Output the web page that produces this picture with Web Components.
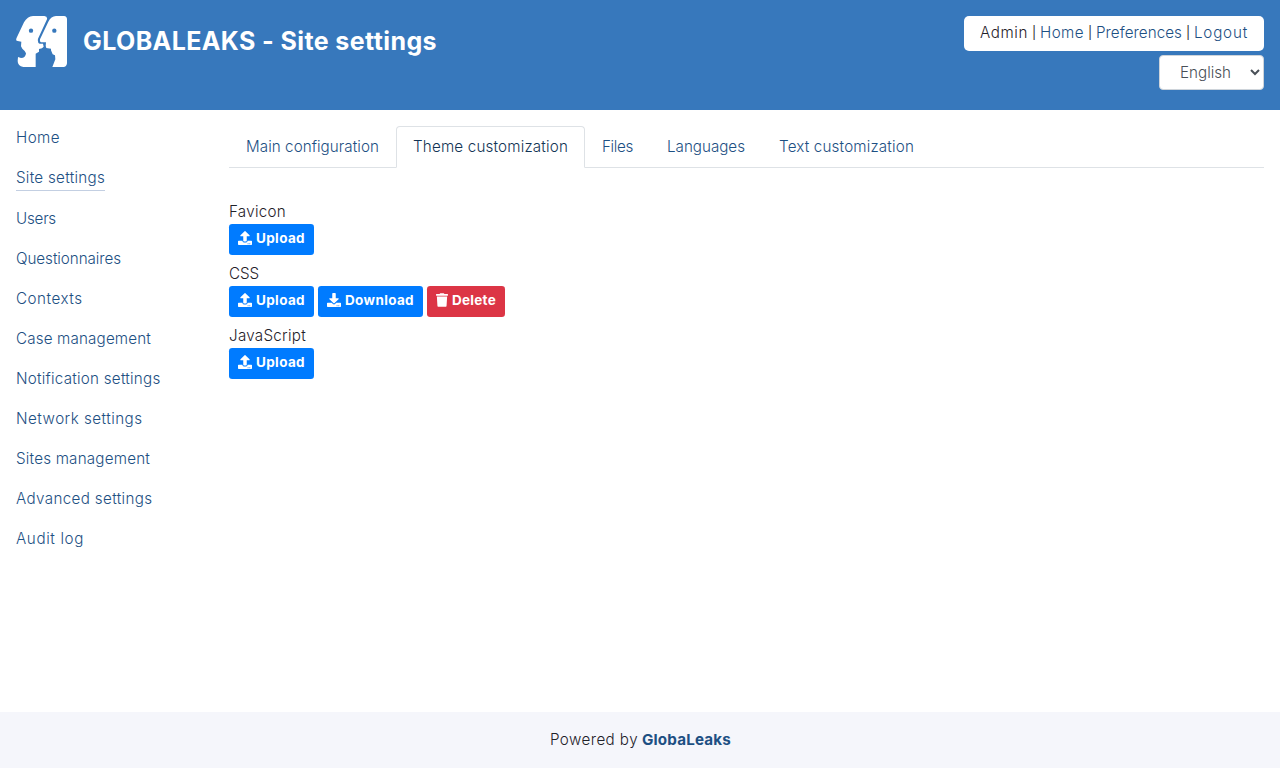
<!DOCTYPE html>
<html lang="en">
<head>
<meta charset="utf-8">
<title>GLOBALEAKS - Site settings</title>
<style>
html,body{margin:0;height:100%}
body{font:360 15.2px/24px Inter,"Open Sans",sans-serif;color:#1f2129;background:#fff}
</style>
</head>
<body>
<gl-app></gl-app>
<script>
const define = (name, html, setup) => {
  const template = document.createElement('template');
  template.innerHTML = html;
  customElements.define(name, class extends HTMLElement {
    constructor() {
      super();
      this.attachShadow({mode: 'open'}).append(template.content.cloneNode(true));
    }
    connectedCallback() { if (setup) setup(this, this.shadowRoot); }
  });
};

// Text tracked to a fixed measure given by its "w" attribute.
define('gl-text', `<style>:host{display:inline-block;white-space:nowrap}span{display:inline-block}</style><span><slot></slot></span>`, (el, root) => {
  const span = root.querySelector('span'), w = +el.getAttribute('w');
  const natural = span.getBoundingClientRect().width;
  span.style.letterSpacing = (w - natural) / el.textContent.length + 'px';
  el.style.width = w + 'px';
});

define('gl-logo', `<style>:host{display:block;width:51px;height:51px}svg{display:block}</style>
<svg width="51" height="51" viewBox="48 48 153 153"><g fill="#fff">
<path d="M99 48H133Q143 49 141 58L114 116Q112 129 119 131H129L131 140Q128 146 117 147V155L107 161V201H70Q53 198 53 183L54 171L63 174Q77 174 78 160Q76 153 67 146L63 139L64 125L50 122Q47 119 50 113L72 67Q82 49 99 48Z"/>
<path d="M168 48H192Q201 49 201 58V190Q200 201 190 201H157L166 178L165 166L158 163L153 151V146L139 144Q136 138 138 127H123Q118 125 120 118L145 65Q153 49 168 48Z"/></g>
<circle cx="93" cy="92" r="6.5" fill="#3778bc"/><circle cx="163" cy="92" r="6.5" fill="#3778bc"/></svg>`);

define('gl-link', `<style>:host{display:inline-block;color:#1d5083;cursor:pointer}</style><slot></slot>`);

define('gl-userbox', `<style>
:host{display:flex;box-sizing:border-box;width:300px;height:35px;padding:5px 16px;background:#fff;border-radius:5px;justify-content:space-between}
i{font-style:normal;width:12px;text-align:center;font-size:12.5px;font-weight:400}
</style><gl-text w="48">Admin</gl-text><i>|</i><gl-link><gl-text w="44">Home</gl-text></gl-link><i>|</i><gl-link><gl-text w="86">Preferences</gl-text></gl-link><i>|</i><gl-link><gl-text w="54">Logout</gl-text></gl-link>`);

define('gl-language', `<style>
:host{display:block}
select{display:block;box-sizing:border-box;width:105px;height:35px;margin:0;padding:0 0 0 16px;border:1px solid #ced4da;border-radius:4px;background:#fff;color:#495057;font:inherit}
</style><select><option>English</option></select>`);

define('gl-header', `<style>
:host{display:flex;box-sizing:border-box;height:110px;padding:16px;background:#3778bc;align-items:flex-start}
h1{margin:0 0 0 16px;font-size:25px;line-height:50px;font-weight:650;color:#fff;flex:1}
div{display:flex;flex-direction:column;align-items:flex-end;gap:4px}
</style><gl-logo></gl-logo><h1><gl-text w="354">GLOBALEAKS - Site settings</gl-text></h1><div><gl-userbox></gl-userbox><gl-language></gl-language></div>`);

define('gl-nav-item', `<style>
:host{display:block;padding:8px 0}
gl-link{display:block;width:max-content}
:host([active]) gl-link{border-bottom:1px solid #c3cfe2}
</style><gl-link><slot></slot></gl-link>`);

define('gl-nav', `<style>:host{display:block;width:213px;padding-top:8px}</style>
<gl-nav-item><gl-text w="44">Home</gl-text></gl-nav-item>
<gl-nav-item active><gl-text w="89">Site settings</gl-text></gl-nav-item>
<gl-nav-item><gl-text w="40">Users</gl-text></gl-nav-item>
<gl-nav-item><gl-text w="105">Questionnaires</gl-text></gl-nav-item>
<gl-nav-item><gl-text w="66.5">Contexts</gl-text></gl-nav-item>
<gl-nav-item><gl-text w="135">Case management</gl-text></gl-nav-item>
<gl-nav-item><gl-text w="144.5">Notification settings</gl-text></gl-nav-item>
<gl-nav-item><gl-text w="126.5">Network settings</gl-text></gl-nav-item>
<gl-nav-item><gl-text w="134">Sites management</gl-text></gl-nav-item>
<gl-nav-item><gl-text w="136.5">Advanced settings</gl-text></gl-nav-item>
<gl-nav-item><gl-text w="68">Audit log</gl-text></gl-nav-item>`);

define('gl-tab', `<style>
:host{display:block;box-sizing:border-box;height:42px;padding:8px 16px;border:1px solid transparent;border-radius:4px 4px 0 0;color:#1d5083;cursor:pointer}
:host([active]){border-color:#dee2e6 #dee2e6 #fff;background:#fff;color:#123455}
</style><slot></slot>`);

define('gl-tabs', `<style>
:host{display:flex;height:41px;border-bottom:1px solid #dee2e6}
</style><gl-tab><gl-text w="133">Main configuration</gl-text></gl-tab><gl-tab active><gl-text w="155">Theme customization</gl-text></gl-tab><gl-tab><gl-text w="31">Files</gl-text></gl-tab><gl-tab><gl-text w="78">Languages</gl-text></gl-tab><gl-tab><gl-text w="135">Text customization</gl-text></gl-tab>`);

const icons = {
  upload: '<path d="M296 384h-80c-13.300 0-24-10.700-24-24V192h-87.700c-17.800 0-26.700-21.500-14.100-34.100L242.300 5.700c7.500-7.500 19.800-7.500 27.300 0l152.200 152.200c12.600 12.600 3.700 34.100-14.100 34.100H320v168c0 13.300-10.700 24-24 24zm216-8v112c0 13.300-10.700 24-24 24H24c-13.300 0-24-10.700-24-24V376c0-13.300 10.700-24 24-24h136v8c0 30.900 25.100 56 56 56h80c30.900 0 56-25.100 56-56v-8h136c13.300 0 24 10.700 24 24zm-124 88c0-11-9-20-20-20s-20 9-20 20 9 20 20 20 20-9 20-20zm64 0c0-11-9-20-20-20s-20 9-20 20 9 20 20 20 20-9 20-20z"/>',
  download: '<path d="M216 0h80c13.300 0 24 10.700 24 24v168h87.700c17.800 0 26.700 21.500 14.100 34.100L269.700 378.300c-7.500 7.500-19.800 7.500-27.300 0L90.100 226.100c-12.600-12.600-3.700-34.100 14.100-34.100H192V24c0-13.300 10.700-24 24-24zm296 376v112c0 13.300-10.700 24-24 24H24c-13.300 0-24-10.700-24-24V376c0-13.300 10.700-24 24-24h146.700l49 49c20.100 20.100 52.500 20.100 72.600 0l49-49H488c13.300 0 24 10.700 24 24zm-124 88c0-11-9-20-20-20s-20 9-20 20 9 20 20 20 20-9 20-20zm64 0c0-11-9-20-20-20s-20 9-20 20 9 20 20 20 20-9 20-20z"/>',
  trash: '<path d="M432 32H312l-9.400-18.700A24 24 0 0 0 281.100 0H166.800a23.700 23.700 0 0 0-21.400 13.300L136 32H16A16 16 0 0 0 0 48v32a16 16 0 0 0 16 16h416a16 16 0 0 0 16-16V48a16 16 0 0 0-16-16zM53.200 467a48 48 0 0 0 47.900 45h245.800a48 48 0 0 0 47.900-45L416 128H32z"/>'
};

define('gl-button', `<style>
:host{display:flex;box-sizing:border-box;height:31px;padding:4px 9px;gap:4px;border-radius:3.2px;background:#007bff;color:#fff;font-size:13.5px;line-height:21px;font-weight:700;cursor:pointer}
:host([danger]){background:#dc3545}
svg{display:block;height:14px;margin-top:3px;fill:#fff}
</style><svg></svg><slot></slot>`, (el, root) => {
  const kind = el.getAttribute('icon'), svg = root.querySelector('svg'), trash = kind === 'trash';
  svg.setAttribute('viewBox', trash ? '0 0 448 512' : '0 0 512 512');
  svg.setAttribute('width', trash ? 12 : 14);
  svg.innerHTML = icons[kind];
});

define('gl-file-row', `<style>
:host{display:block;margin-bottom:7px}
div{display:flex;gap:4px}
</style><slot name="label"></slot><div><slot></slot></div>`);

define('gl-theme', `<style>:host{display:block;padding-top:32px}gl-text{vertical-align:top}[slot=label]{display:block}</style>
<gl-file-row><gl-text slot="label" w="57">Favicon</gl-text><gl-button icon="upload"><gl-text w="49">Upload</gl-text></gl-button></gl-file-row>
<gl-file-row><gl-text slot="label" w="30">CSS</gl-text><gl-button icon="upload"><gl-text w="49">Upload</gl-text></gl-button><gl-button icon="download"><gl-text w="69">Download</gl-text></gl-button><gl-button icon="trash" danger><gl-text w="44">Delete</gl-text></gl-button></gl-file-row>
<gl-file-row><gl-text slot="label" w="77">JavaScript</gl-text><gl-button icon="upload"><gl-text w="49">Upload</gl-text></gl-button></gl-file-row>`);

define('gl-footer', `<style>
:host{display:flex;box-sizing:border-box;height:56px;padding:16px 16px 16px 17px;justify-content:center;gap:4px;background:#f5f6fb}
gl-link{font-weight:700}
</style><gl-text w="88">Powered by</gl-text><gl-link><gl-text w="89">GlobaLeaks</gl-text></gl-link>`);

define('gl-app', `<style>
:host{display:flex;flex-direction:column;min-height:100vh}
main{display:flex;flex:1;padding:0 16px}
section{flex:1;padding-top:16px}
</style><gl-header></gl-header><main><gl-nav></gl-nav><section><gl-tabs></gl-tabs><gl-theme></gl-theme></section></main><gl-footer></gl-footer>`);
</script>
</body>
</html>
